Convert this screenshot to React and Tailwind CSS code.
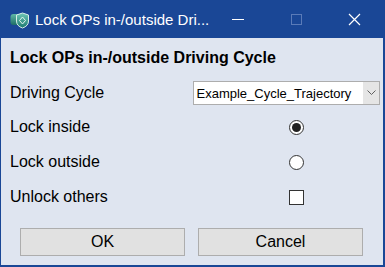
import React from "react";

function AppIcon() {
  return (
    <svg width="20" height="20" viewBox="0 0 20 20">
      <defs>
        <linearGradient id="g1" x1="0" y1="0" x2="0" y2="1">
          <stop offset="0" stopColor="#5fb8a6" />
          <stop offset="1" stopColor="#1e6e66" />
        </linearGradient>
        <linearGradient id="g2" x1="0" y1="0" x2="0" y2="1">
          <stop offset="0" stopColor="#6fc7b6" />
          <stop offset="1" stopColor="#1c7a70" />
        </linearGradient>
      </defs>
      <rect x="0.5" y="4" width="14" height="11" rx="3" fill="url(#g1)" />
      <path d="M12.5 3 L18.5 5 L18.5 11 Q18.5 16 12.5 18 Q6.5 16 6.5 11 L6.5 5 Z" fill="url(#g2)" stroke="#d8efe9" strokeWidth="1" />
      <path d="M12.5 7 L15.5 10.5 L12.5 14 L9.5 10.5 Z" fill="none" stroke="#e6f6f2" strokeWidth="1" />
    </svg>
  );
}

export default function App() {
  const font = { fontFamily: '"Liberation Sans", Arial, sans-serif' };
  return (
    <div className="w-[385px] h-[267px] flex flex-col bg-[#1a4796] p-[1px] pb-[2px] pr-[2px]" style={font}>
      <div className="h-[37px] flex items-center text-white">
        <div className="w-[34px] flex justify-center pl-[3px]">
          <AppIcon />
        </div>
        <div className="flex-1 whitespace-nowrap overflow-hidden text-[15px] mt-[1px]" style={{ fontFamily: '"Liberation Sans", Arial, sans-serif' }}>
          Lock OPs in-/outside Dri...
        </div>
        <div className="w-[58px] h-full flex items-center justify-center">
          <div className="w-[12px] h-[1px] bg-white" />
        </div>
        <div className="w-[58px] h-full flex items-center justify-center">
          <div className="w-[11px] h-[11px] border border-[#5a7bb8]" />
        </div>
        <div className="w-[58px] h-full flex items-center justify-center">
          <svg width="13" height="13" viewBox="0 0 13 13">
            <path d="M1 1 L12 12 M12 1 L1 12" stroke="white" strokeWidth="1.2" />
          </svg>
        </div>
      </div>
      <div className="flex-1 bg-[#dfe5f0] flex flex-col pl-[9px] pr-[3px] text-black">
        <div className="mt-[11px] font-bold text-[16px] leading-[18px]">Lock OPs in-/outside Driving Cycle</div>
        <div className="mt-[14px] flex items-center h-[24px]">
          <div className="w-[183px] text-[16px]">Driving Cycle</div>
          <div className="w-[188px] h-[24px] bg-white border border-[#adadad] flex items-center">
            <div className="flex-1 text-[13px] pl-[3px] leading-none">Example_Cycle_Trajectory</div>
            <div className="w-[16px] h-full bg-[#e5e5e5] flex items-center justify-center">
              <svg width="9" height="6" viewBox="0 0 9 6">
                <path d="M0.5 0.5 L4.5 4.5 L8.5 0.5" fill="none" stroke="#606060" strokeWidth="1" />
              </svg>
            </div>
          </div>
        </div>
        <div className="mt-[10px] flex items-center h-[24px]">
          <div className="w-[279px] text-[16px]">Lock inside</div>
          <div className="w-[15px] h-[15px] rounded-full border border-[#333] bg-white flex items-center justify-center">
            <div className="w-[9px] h-[9px] rounded-full bg-[#222]" />
          </div>
        </div>
        <div className="mt-[11px] flex items-center h-[24px]">
          <div className="w-[279px] text-[16px]">Lock outside</div>
          <div className="w-[15px] h-[15px] rounded-full border border-[#333] bg-white" />
        </div>
        <div className="mt-[11px] flex items-center h-[24px]">
          <div className="w-[279px] text-[16px]">Unlock others</div>
          <div className="w-[15px] h-[15px] border border-[#333] bg-white" />
        </div>
        <div className="mt-[19px] flex gap-[13px] pl-[10px]">
          <div className="w-[165px] h-[28px] bg-[#e1e1e1] border border-[#adadad] flex items-center justify-center text-[16px]">OK</div>
          <div className="w-[165px] h-[28px] bg-[#e1e1e1] border border-[#adadad] flex items-center justify-center text-[16px]">Cancel</div>
        </div>
      </div>
    </div>
  );
}
